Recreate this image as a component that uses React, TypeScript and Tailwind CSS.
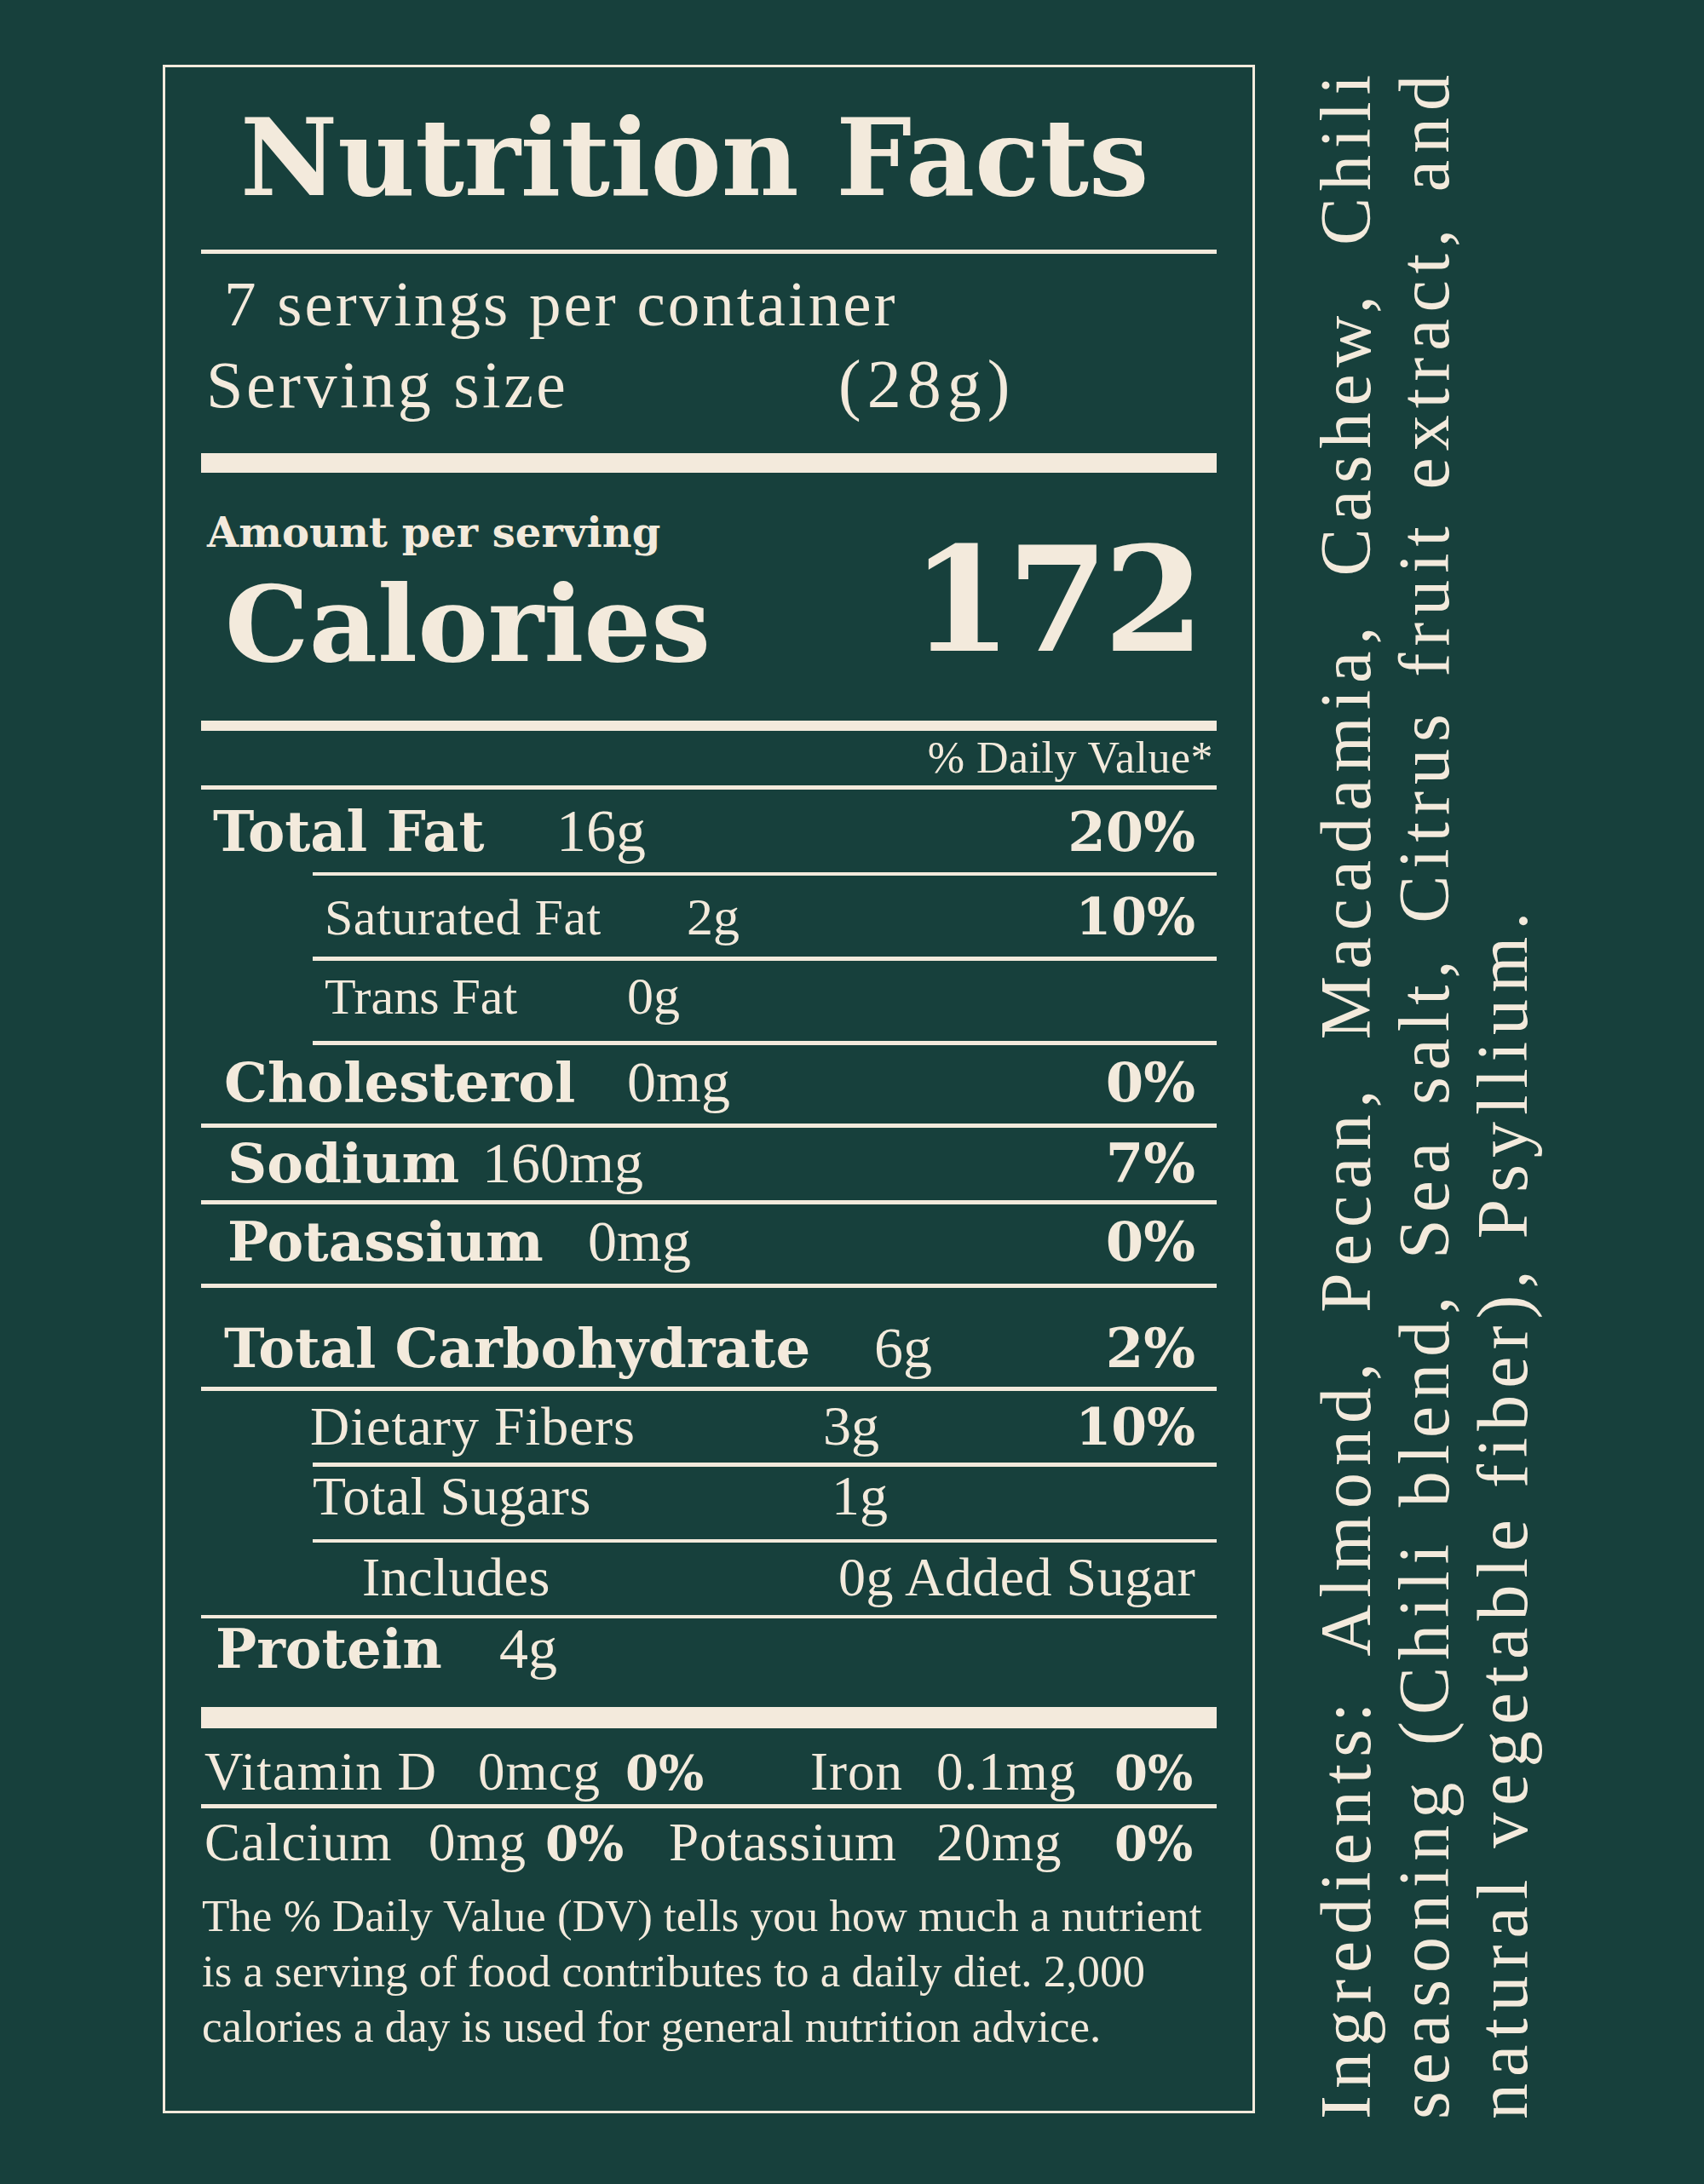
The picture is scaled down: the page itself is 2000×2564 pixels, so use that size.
import type { ReactNode } from "react";

const BOLD = "font-['DejaVu_Serif',serif] font-bold";

type RowProps = {
    box: string;
    labelCls: string;
    label: ReactNode;
    valueCls?: string;
    value?: ReactNode;
    pct?: string;
    pctCls?: string;
};

function Row({ box, labelCls, label, valueCls, value, pct, pctCls }: RowProps) {
    return (
        <div className={`flex items-baseline pr-[25px] ${box}`}>
            <span className={`shrink-0 leading-none whitespace-nowrap ${labelCls}`}>{label}</span>
            <span className={`flex-1 leading-none whitespace-nowrap ${valueCls ?? ""}`}>{value}</span>
            {pct && <span className={`leading-none ${BOLD} ${pctCls ?? "text-[64px]"}`}>{pct}</span>}
        </div>
    );
}

function Rule({ className }: { className: string }) {
    return <div className={`bg-[#f3eadc] ${className}`} />;
}

export default function App() {
    return (
        <div className="w-[2000px] h-[2564px] bg-[#17403c] text-[#f3eadc] font-['Liberation_Serif',serif] flex items-start pl-[191px] pt-[76px]">
            {/* label box */}
            <div className="w-[1282px] h-[2405px] shrink-0 border-[3px] border-[#f3eadc] px-[42px] flex flex-col">
                {/* title */}
                <div className="h-[214px] pt-[44px] pl-[46px]">
                    <h1 className={`${BOLD} text-[125px] leading-none`}>Nutrition Facts</h1>
                </div>
                <Rule className="h-[5px]" />

                {/* servings */}
                <div className="h-[234px] pt-[21px]">
                    <p className="pl-[27px] text-[75px] leading-none tracking-[3px]">7 servings per container</p>
                    <div className="flex items-baseline pl-[6px] mt-[17px]">
                        <span className="w-[742px] shrink-0 text-[78px] leading-none tracking-[3.5px]">Serving size</span>
                        <span className="text-[80px] leading-none tracking-[7px]">(28g)</span>
                    </div>
                </div>
                <Rule className="h-[23px]" />

                {/* calories */}
                <div className="h-[291px] flex justify-between">
                    <div className="flex flex-col pt-[46px]">
                        <p className={`pl-[7px] ${BOLD} text-[48px] leading-none`}>Amount per serving</p>
                        <p className={`pl-[28px] mt-[22px] ${BOLD} text-[124px] leading-none`}>Calories</p>
                    </div>
                    <p className={`pt-[63px] pr-[20px] ${BOLD} text-[171px] leading-none tracking-[-6px]`}>172</p>
                </div>
                <Rule className="h-[12px]" />

                <div className="h-[64px] flex justify-end pt-[6px] pr-[4px]">
                    <span className="text-[52px] leading-none tracking-[0.5px]">% Daily Value*</span>
                </div>
                <Rule className="h-[5px]" />

                <Row box="h-[97px] pt-[14px] pl-[14px]" labelCls={`w-[403px] ${BOLD} text-[65px]`} label="Total Fat" valueCls="text-[70px]" value="16g" pct="20%" />
                <Rule className="h-[4px] ml-[131px]" />
                <Row box="h-[95px] pt-[17px] pl-[145px]" labelCls="w-[425px] text-[60px] tracking-[0.5px]" label="Saturated Fat" valueCls="text-[62px]" value="2g" pct="10%" pctCls="text-[60px]" />
                <Rule className="h-[5px] ml-[131px]" />
                <Row box="h-[94px] pt-[10px] pl-[145px]" labelCls="w-[355px] text-[60px]" label="Trans Fat" valueCls="text-[62px]" value="0g" />
                <Rule className="h-[5px] ml-[131px]" />
                <Row box="h-[92px] pt-[9px] pl-[27px]" labelCls={`w-[473px] ${BOLD} text-[64px]`} label="Cholesterol" valueCls="text-[68px]" value="0mg" pct="0%" />
                <Rule className="h-[5px]" />
                <Row box="h-[85px] pt-[7px] pl-[31px]" labelCls={`w-[299px] ${BOLD} text-[64px]`} label="Sodium" valueCls="text-[68px]" value="160mg" pct="7%" />
                <Rule className="h-[5px]" />
                <Row box="h-[93px] pt-[9px] pl-[31px]" labelCls={`w-[423px] ${BOLD} text-[64px]`} label="Potassium" valueCls="text-[68px]" value="0mg" pct="0%" />
                <Rule className="h-[5px]" />
                <Row box="h-[116px] pt-[36px] pl-[27px]" labelCls={`w-[763px] ${BOLD} text-[64px]`} label="Total Carbohydrate" valueCls="text-[68px]" value="6g" pct="2%" />
                <Rule className="h-[5px]" />
                <Row box="h-[84px] pt-[8px] pl-[128px]" labelCls="w-[602px] text-[64px] tracking-[1px]" label="Dietary Fibers" valueCls="text-[66px]" value="3g" pct="10%" pctCls="text-[60px]" />
                <Rule className="h-[5px] ml-[131px]" />
                <Row box="h-[85px] pt-[1px] pl-[131px]" labelCls="w-[609px] text-[64px] tracking-[0.5px]" label="Total Sugars" valueCls="text-[66px]" value="1g" />
                <Rule className="h-[4px] ml-[131px]" />
                <Row box="h-[85px] pt-[9px] pl-[189px]" labelCls="w-[559px] text-[64px] tracking-[0.5px]" label="Includes" valueCls="text-[64px] tracking-[0.5px]" value="0g Added Sugar" />
                <Rule className="h-[4px]" />
                <Row box="h-[104px] pt-[1px] pl-[17px]" labelCls={`w-[333px] ${BOLD} text-[64px]`} label="Protein" valueCls="text-[68px]" value="4g" />
                <Rule className="h-[25px]" />

                {/* vitamins and minerals */}
                <div className="h-[89px] pt-[20px] pl-[4px] flex items-baseline text-[63px] leading-none tracking-[1px] whitespace-nowrap">
                    <span className="w-[321px] shrink-0">Vitamin D</span>
                    <span className="w-[173px] shrink-0">0mcg</span>
                    <span className={`w-[217px] shrink-0 ${BOLD} text-[56px] tracking-normal`}>0%</span>
                    <span className="w-[148px] shrink-0">Iron</span>
                    <span className="w-[209px] shrink-0">0.1mg</span>
                    <span className={`${BOLD} text-[56px] tracking-normal`}>0%</span>
                </div>
                <Rule className="h-[5px]" />
                <div className="pt-[9px] pl-[4px] flex items-baseline text-[63px] leading-none tracking-[1px] whitespace-nowrap">
                    <span className="w-[263px] shrink-0">Calcium</span>
                    <span className="w-[137px] shrink-0">0mg</span>
                    <span className={`w-[145px] shrink-0 ${BOLD} text-[56px] tracking-normal`}>0%</span>
                    <span className="w-[314px] shrink-0">Potassium</span>
                    <span className="w-[209px] shrink-0">20mg</span>
                    <span className={`${BOLD} text-[56px] tracking-normal`}>0%</span>
                </div>

                <p className="mt-[22px] pl-[1px] text-[53px] leading-[65px] whitespace-nowrap">
                    The % Daily Value (DV) tells you how much a nutrient
                    <br />
                    is a serving of food contributes to a daily diet. 2,000
                    <br />
                    calories a day is used for general nutrition advice.
                </p>
            </div>

            {/* ingredients, read bottom to top */}
            <div className="ml-[61px] mt-[4px] h-[2408px] [writing-mode:vertical-rl] rotate-180 text-[84px] leading-[92px] tracking-[8px]">
                <span className="block text-justify [text-align-last:justify]">Ingredients: Almond, Pecan, Macadamia, Cashew, Chili</span>
                <span className="block text-justify [text-align-last:justify]">seasoning (Chili blend, Sea salt, Citrus fruit extract, and</span>
                <span className="block">natural vegetable fiber), Psyllium.</span>
            </div>
        </div>
    );
}
